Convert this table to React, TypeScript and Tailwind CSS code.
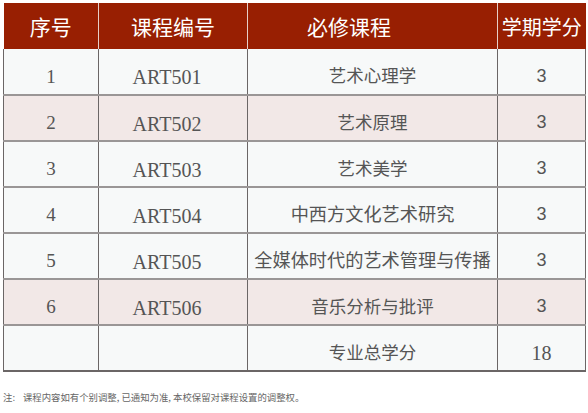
const rows = [
  { no: "1", code: "ART501", name: "艺术心理学", credit: "3", pink: false, big: false },
  { no: "2", code: "ART502", name: "艺术原理", credit: "3", pink: true, big: false },
  { no: "3", code: "ART503", name: "艺术美学", credit: "3", pink: false, big: false },
  { no: "4", code: "ART504", name: "中西方文化艺术研究", credit: "3", pink: false, big: true },
  { no: "5", code: "ART505", name: "全媒体时代的艺术管理与传播", credit: "3", pink: false, big: true },
  { no: "6", code: "ART506", name: "音乐分析与批评", credit: "3", pink: true, big: false },
];

const serif = "font-['Liberation_Serif','Noto_Sans_CJK_SC',serif]";
const sans = "font-['Liberation_Sans','Noto_Sans_CJK_SC',sans-serif]";
const cjk = "font-['Noto_Sans_CJK_SC',sans-serif]";

const App = () => {
  return (
    <div className="w-[588px] h-[413px] bg-white pt-[3px] pl-[3px]">
      <table className="w-[582px] table-fixed border-collapse text-[#555]">
        <colgroup>
          <col className="w-[95px]" />
          <col className="w-[149px]" />
          <col className="w-[250px]" />
          <col className="w-[88px]" />
        </colgroup>
        <thead>
          <tr className={`h-[46px] bg-[#981f02] text-white text-[21px] ${cjk}`}>
            <th className="font-normal border-r border-[#e6cfc8] pt-[2px]">序号</th>
            <th className="font-normal border-r border-[#e6cfc8] pt-[2px]">课程编号</th>
            <th className="font-normal border-r border-[#e6cfc8] pt-[2px] text-left pl-[59px]">必修课程</th>
            <th className="font-normal pt-[2px] whitespace-nowrap text-[20px]">学期学分</th>
          </tr>
        </thead>
        <tbody>
          {rows.map((r) => (
            <tr
              key={r.no}
              className={`h-[46px] border-b-2 border-[#9a9696] ${r.pink ? "bg-[#f2e8e7]" : "bg-[#f7f9f9]"}`}
            >
              <td className={`text-center pt-[11px] text-[19px] border-l border-r border-[#6b6666] ${serif}`}>{r.no}</td>
              <td className={`text-center pt-[11px] pr-[12px] text-[20px] border-r border-[#6b6666] ${serif}`}>{r.code}</td>
              <td className={`text-center pt-[8px] whitespace-nowrap border-r border-[#6b6666] ${cjk} ${r.big ? "text-[18.2px]" : "text-[17.5px]"}`}>{r.name}</td>
              <td className={`text-center pt-[9px] text-[18px] border-r border-[#6b6666] ${sans}`}>{r.credit}</td>
            </tr>
          ))}
          <tr className="h-[46px] border-b-2 border-[#6b6666] bg-[#f7f9f9]">
            <td className="border-l border-r border-[#6b6666]"></td>
            <td className="border-r border-[#6b6666]"></td>
            <td className={`text-center pt-[8px] text-[17.5px] border-r border-[#6b6666] ${cjk}`}>专业总学分</td>
            <td className={`text-center pt-[10px] text-[20px] border-r border-[#6b6666] ${serif}`}>18</td>
          </tr>
        </tbody>
      </table>
      <div className={`mt-[21px] flex items-center gap-[8px] text-[9.4px] leading-none text-[#666] ${cjk}`}>
        <span>注:</span>
        <span>课程内容如有个别调整, 已通知为准, 本校保留对课程设置的调整权。</span>
      </div>
    </div>
  );
};

export default App;
